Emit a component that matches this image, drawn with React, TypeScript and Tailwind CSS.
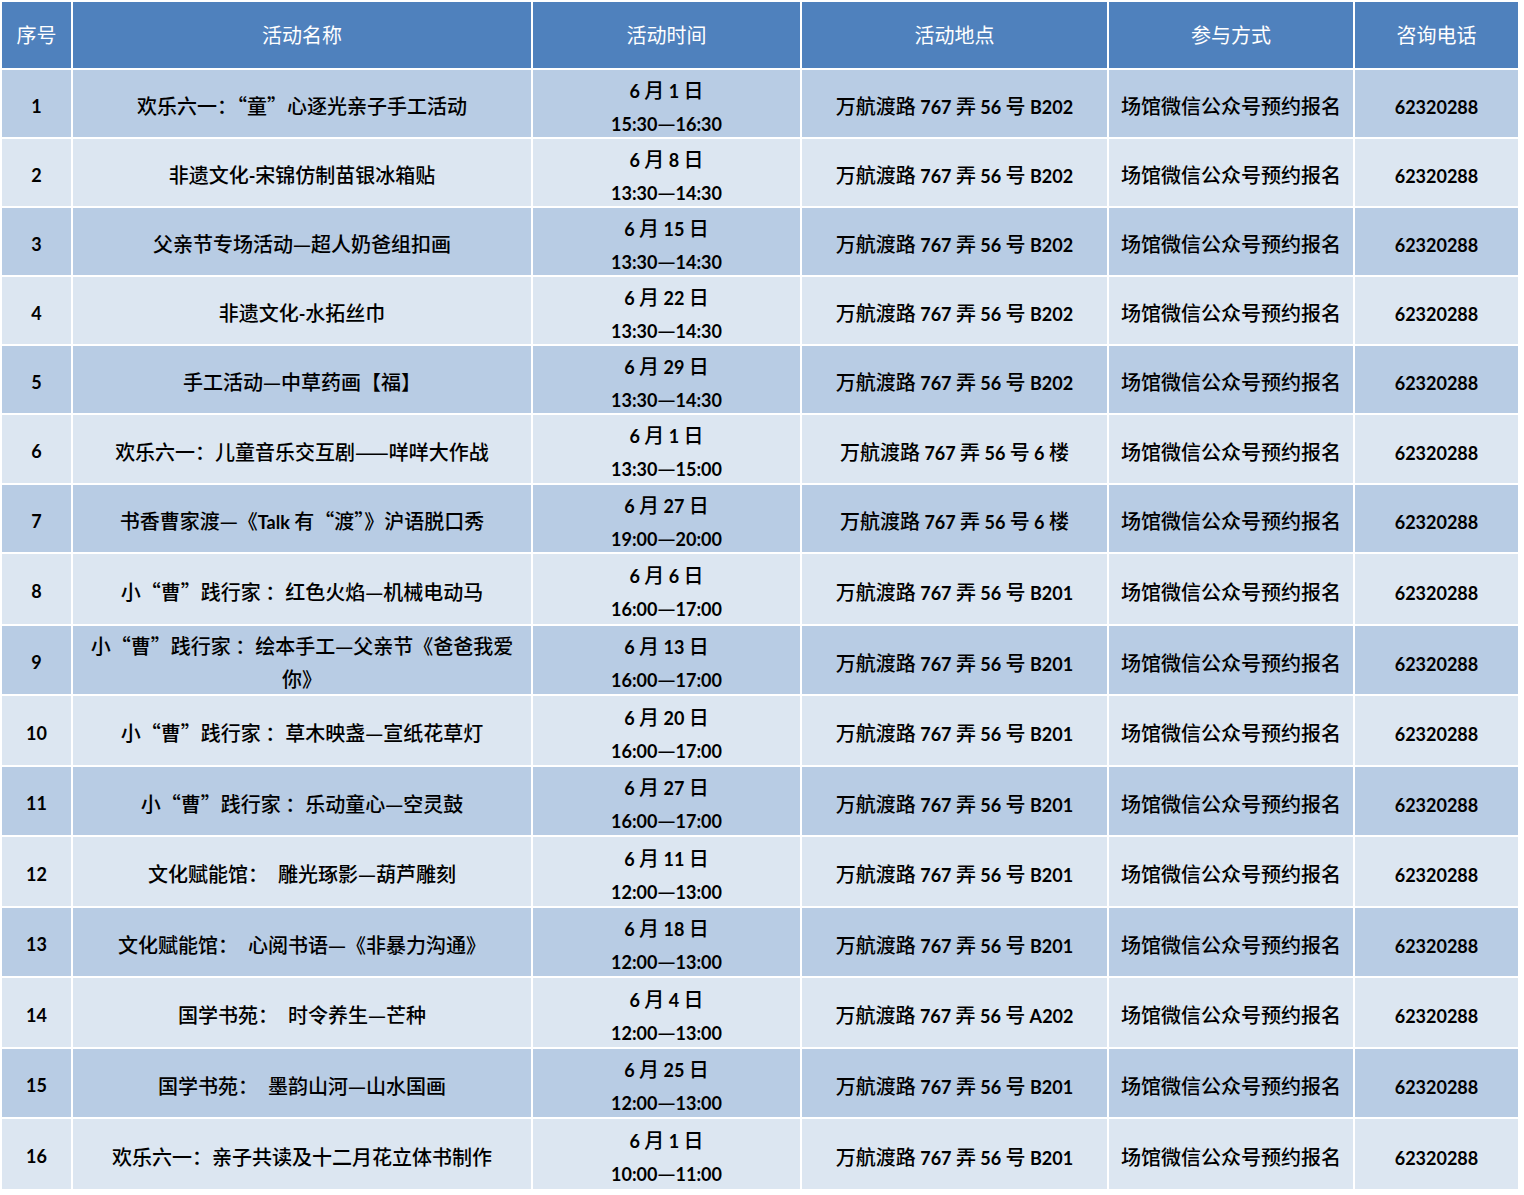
import React from "react";

type Row = { name: string; date: string; time: string; place: string };

const rows: Row[] = [
  { name: "欢乐六一：“童”心逐光亲子手工活动", date: "6 月 1 日", time: "15:30—16:30", place: "万航渡路 767 弄 56 号 B202" },
  { name: "非遗文化-宋锦仿制苗银冰箱贴", date: "6 月 8 日", time: "13:30—14:30", place: "万航渡路 767 弄 56 号 B202" },
  { name: "父亲节专场活动—超人奶爸组扣画", date: "6 月 15 日", time: "13:30—14:30", place: "万航渡路 767 弄 56 号 B202" },
  { name: "非遗文化-水拓丝巾", date: "6 月 22 日", time: "13:30—14:30", place: "万航渡路 767 弄 56 号 B202" },
  { name: "手工活动—中草药画【福】", date: "6 月 29 日", time: "13:30—14:30", place: "万航渡路 767 弄 56 号 B202" },
  { name: "欢乐六一：儿童音乐交互剧——咩咩大作战", date: "6 月 1 日", time: "13:30—15:00", place: "万航渡路 767 弄 56 号 6 楼" },
  { name: "书香曹家渡—《Talk 有“渡”》沪语脱口秀", date: "6 月 27 日", time: "19:00—20:00", place: "万航渡路 767 弄 56 号 6 楼" },
  { name: "小“曹”践行家 ：红色火焰—机械电动马", date: "6 月 6 日", time: "16:00—17:00", place: "万航渡路 767 弄 56 号 B201" },
  { name: "小“曹”践行家 ：绘本手工—父亲节《爸爸我爱\n你》", date: "6 月 13 日", time: "16:00—17:00", place: "万航渡路 767 弄 56 号 B201" },
  { name: "小“曹”践行家 ：草木映盏—宣纸花草灯", date: "6 月 20 日", time: "16:00—17:00", place: "万航渡路 767 弄 56 号 B201" },
  { name: "小“曹”践行家 ：乐动童心—空灵鼓", date: "6 月 27 日", time: "16:00—17:00", place: "万航渡路 767 弄 56 号 B201" },
  { name: "文化赋能馆：　雕光琢影—葫芦雕刻", date: "6 月 11 日", time: "12:00—13:00", place: "万航渡路 767 弄 56 号 B201" },
  { name: "文化赋能馆：　心阅书语—《非暴力沟通》", date: "6 月 18 日", time: "12:00—13:00", place: "万航渡路 767 弄 56 号 B201" },
  { name: "国学书苑：　时令养生—芒种", date: "6 月 4 日", time: "12:00—13:00", place: "万航渡路 767 弄 56 号 A202" },
  { name: "国学书苑：　墨韵山河—山水国画", date: "6 月 25 日", time: "12:00—13:00", place: "万航渡路 767 弄 56 号 B201" },
  { name: "欢乐六一：亲子共读及十二月花立体书制作", date: "6 月 1 日", time: "10:00—11:00", place: "万航渡路 767 弄 56 号 B201" },
];

const headers = ["序号", "活动名称", "活动时间", "活动地点", "参与方式", "咨询电话"];

// CJK runs and Latin runs get different fonts/sizes, like the Word table
const Mixed = ({ text }: { text: string }) => (
  <>
    {text
      .split(/([^\x00-\x7f]+)/)
      .filter(Boolean)
      .map((part, i) =>
        /[^\x00-\x7f]/.test(part) ? (
          <span key={i} className="font-['Noto_Sans_CJK_SC',sans-serif] font-medium text-[20px] leading-none">
            {part}
          </span>
        ) : (
          <span key={i} className="font-['Lato','Noto_Sans_CJK_SC',sans-serif] font-bold text-[18px] leading-none whitespace-pre">
            {part}
          </span>
        )
      )}
  </>
);

const Line = ({ text }: { text: string }) => (
  <div className="h-[33px] leading-[33px]">
    <Mixed text={text} />
  </div>
);

const Cell = ({ children, bg }: { children: React.ReactNode; bg: string }) => (
  <div className={`${bg} flex flex-col items-center justify-center text-center text-black pt-[10px] px-2 whitespace-nowrap`}>
    {children}
  </div>
);

export default function App() {
  return (
    <div className="w-[1524px] h-[1195px] bg-white overflow-hidden">
      <div className="grid grid-cols-[69px_458px_267px_305px_244px_163px] grid-rows-[66px_67px_67px_67px_67px_67px_68px_67px_70px_68px_69px_68px_69px_68px_69px_68px_70px] gap-[2px] p-[2px] w-fit bg-white">
        {headers.map((h) => (
          <div
            key={h}
            className="bg-[#4f81bd] flex items-center justify-center text-white font-['Noto_Sans_CJK_SC',sans-serif] text-[20px]"
          >
            {h}
          </div>
        ))}
        {rows.map((r, i) => {
          const bg = i % 2 === 0 ? "bg-[#b8cce4]" : "bg-[#dce6f1]";
          return (
            <React.Fragment key={i}>
              <div className={`${bg} flex items-center justify-center pt-[5px] font-['Lato',sans-serif] font-bold text-[18px] text-black`}>
                {i + 1}
              </div>
              <Cell bg={bg}>
                {r.name.split("\n").map((line, j) => (
                  <Line key={j} text={line} />
                ))}
              </Cell>
              <Cell bg={bg}>
                <Line text={r.date} />
                <Line text={r.time} />
              </Cell>
              <Cell bg={bg}>
                <Line text={r.place} />
              </Cell>
              <Cell bg={bg}>
                <Line text="场馆微信公众号预约报名" />
              </Cell>
              <Cell bg={bg}>
                <Line text="62320288" />
              </Cell>
            </React.Fragment>
          );
        })}
      </div>
    </div>
  );
}
